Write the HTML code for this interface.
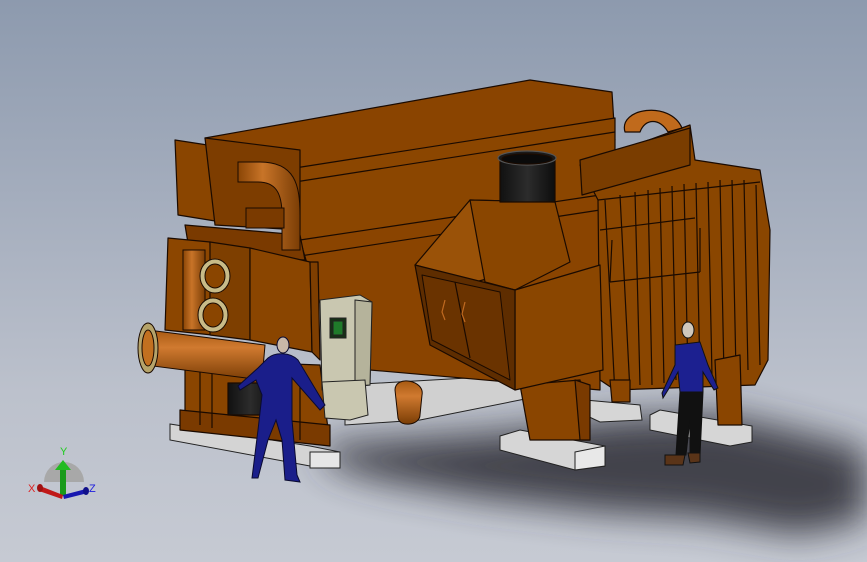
<!DOCTYPE html>
<html><head><meta charset="utf-8"><style>
html,body{margin:0;padding:0;width:867px;height:562px;overflow:hidden}
body{background:linear-gradient(180deg,#8d9aae 0%,#a4adbd 35%,#bcc1cc 70%,#c6cad3 100%)}
svg{position:absolute;left:0;top:0}
text{font-family:"Liberation Sans",sans-serif}
</style></head><body>
<svg width="867" height="562" viewBox="0 0 867 562" xmlns="http://www.w3.org/2000/svg">
<defs>
<filter id="bl" x="-20%" y="-50%" width="140%" height="200%"><feGaussianBlur stdDeviation="18"/></filter>
<linearGradient id="pipe" x1="0" y1="0" x2="0" y2="1"><stop offset="0" stop-color="#a85a12"/><stop offset=".35" stop-color="#d07a30"/><stop offset="1" stop-color="#7a3d05"/></linearGradient>
<linearGradient id="pipeV" x1="0" y1="0" x2="1" y2="0"><stop offset="0" stop-color="#8a4505"/><stop offset=".4" stop-color="#c87428"/><stop offset="1" stop-color="#7a3d05"/></linearGradient>
<linearGradient id="blk" x1="0" y1="0" x2="1" y2="0"><stop offset="0" stop-color="#111"/><stop offset=".5" stop-color="#2c2c2c"/><stop offset="1" stop-color="#0d0d0d"/></linearGradient>
</defs>
<!-- shadow -->
<polygon filter="url(#bl)" fill="#34363c" opacity=".9" points="320,445 500,432 620,418 720,414 790,430 867,450 867,520 800,535 700,518 600,512 480,498 380,480 330,465"/>
<!-- gray bases -->
<g stroke="#222" stroke-width="1">
<polygon fill="#d0d0d0" points="345,385 520,375 530,398 420,420 345,425"/>
<polygon fill="#d4d4d4" points="170,424 310,446 340,452 340,468 310,466 170,440"/>
<polygon fill="#e6e6e6" points="310,452 340,452 340,468 310,468"/>
<polygon fill="#d6d6d6" points="500,436 520,430 605,446 605,466 575,470 500,450"/>
<polygon fill="#e8e8e8" points="575,452 605,446 605,466 575,470"/>
<polygon fill="#d6d6d6" points="650,415 660,410 752,426 752,442 730,446 650,430"/>
<polygon fill="#d6d6d6" points="585,400 640,405 642,420 600,422 585,415"/>
</g>
<!-- main orange -->
<g stroke="#1a0a00" stroke-width="1.2" stroke-linejoin="round">
<polygon fill="#8a4400" points="205,138 530,80 612,92 615,140 300,200 295,168"/>
<polygon fill="#8b4600" points="295,168 615,118 615,210 300,262"/>
<line x1="295" y1="182" x2="615" y2="132"/>
<polygon fill="#8a4400" points="300,240 600,195 600,390 370,370 318,300"/>
<line x1="300" y1="256" x2="600" y2="210"/>
<polygon fill="#8a4500" points="175,140 240,150 240,225 178,215"/>
<polygon fill="#7d3d00" points="205,138 300,150 300,230 215,225"/>
<polygon fill="#7a3a00" points="185,225 300,235 305,260 190,255"/>
<polygon fill="#8c4600" points="168,238 210,242 212,335 165,330"/>
<polygon fill="#7e3f00" points="210,242 250,248 250,340 210,335"/>
<polygon fill="#8a4500" points="250,248 310,262 312,352 250,340"/>
<polygon fill="#7e3e00" points="310,262 318,262 320,360 312,352"/>
<polygon fill="#8a4500" points="185,360 320,365 330,445 185,430"/>
<polygon fill="#7a3a00" points="180,410 330,425 330,446 180,430"/>
<line x1="200" y1="368" x2="200" y2="425"/><line x1="212" y1="370" x2="212" y2="428"/><line x1="300" y1="372" x2="300" y2="440"/>
<rect x="228" y="383" width="45" height="32" fill="url(#blk)"/>
<polygon fill="#8a4600" points="580,165 690,125 695,160 760,170 770,230 768,360 755,385 615,390 600,380 598,200"/>
<polygon fill="#7a3d00" points="580,160 690,128 690,165 582,195"/>
<g fill="none" stroke="#1a0a00">
<path d="M605,200 L615,395 M620,195 L630,392 M635,192 L640,385 M648,190 L652,385 M660,188 L664,383 M672,186 L676,380 M684,184 L688,378 M696,183 L700,378 M708,182 L712,376 M720,180 L724,375 M732,180 L736,372 M744,180 L748,370 M756,185 L760,365"/>
<path d="M598,200 L760,182 M600,230 L695,218 M610,282 L700,272 M610,282 L612,240 M700,272 L700,228"/>
</g>
<path d="M625,132 C618,108 670,100 682,128 L668,132 C660,118 645,118 640,132 Z" fill="#c06a1c"/>
<polygon fill="#8a4500" points="520,385 580,380 590,440 530,440"/>
<polygon fill="#7a3a00" points="575,380 590,385 590,440 580,440"/>
<polygon fill="#8a4500" points="715,360 740,355 742,425 718,425"/>
<polygon fill="#8a4500" points="610,380 630,380 630,402 612,402"/>
<polygon fill="#9a5208" points="415,265 470,200 555,202 560,260 475,282"/>
<polygon fill="#8a4600" points="470,200 555,202 570,262 515,290 485,282"/>
<polygon fill="#8a4600" points="515,290 600,265 603,370 515,390"/>
<polygon fill="#5e2d00" points="415,265 515,290 515,390 430,345"/>
<polygon fill="#6a3300" points="422,275 500,292 510,380 432,340" stroke-width="1"/>
<line x1="455" y1="282" x2="470" y2="358"/>
<path d="M445,300 l-3,12 l3,8 M465,302 l-3,12 l3,8" stroke="#c06a20" fill="none"/>
<rect x="500" y="158" width="55" height="44" fill="url(#blk)"/>
<ellipse cx="527" cy="158" rx="29" ry="7" fill="#1a1a1a" stroke="#555"/>
<ellipse cx="527" cy="159" rx="25" ry="5" fill="#0a0a0a"/>
</g>
<g stroke="#1a0a00" stroke-width="1">
<path d="M238,162 L260,162 C295,162 300,185 300,215 L300,250 L282,250 L282,215 C282,192 275,182 258,182 L238,182 Z" fill="url(#pipeV)"/>
<rect x="183" y="250" width="22" height="80" fill="url(#pipeV)"/>
<path d="M148,330 L265,345 L262,380 L145,365 Z" fill="url(#pipe)"/>
<ellipse cx="148" cy="348" rx="10" ry="25" fill="#b5a36a"/>
<ellipse cx="148" cy="348" rx="6" ry="18" fill="#c27020"/>
<ellipse cx="215" cy="276" rx="15" ry="17" fill="#c8bb88"/>
<ellipse cx="215" cy="276" rx="10" ry="12" fill="#8a4500"/>
<ellipse cx="213" cy="315" rx="15" ry="17" fill="#c8bb88"/>
<ellipse cx="213" cy="315" rx="10" ry="12" fill="#8a4500"/>
<rect x="246" y="208" width="38" height="20" fill="#7a3a00"/>
<path d="M395,390 C395,375 425,380 422,395 L420,415 C420,425 400,428 398,418 Z" fill="url(#pipe)"/>
</g>
<g stroke="#222" stroke-width="1">
<polygon fill="#c9c7b0" points="320,300 360,295 372,302 370,385 322,390"/>
<polygon fill="#b5b39b" points="355,300 372,302 370,385 355,386"/>
<polygon fill="#c9c7b0" points="322,382 365,380 368,415 350,420 325,418"/>
<rect x="330" y="318" width="16" height="20" fill="#163016"/>
<rect x="333" y="321" width="10" height="14" fill="#1f7a2a"/>
</g>
<g stroke="#0a0a30" stroke-width="1">
<ellipse cx="283" cy="345" rx="6" ry="8" fill="#c9b8a8"/>
<path d="M268,358 C275,352 290,352 298,360 L325,405 L320,410 L292,378 L292,420 L297,475 L300,482 L285,480 L282,440 L276,420 L268,440 L258,478 L252,478 L258,430 L262,395 L256,380 L240,390 L238,386 L258,368 Z" fill="#1a1e8a"/>
</g>
<g stroke="#111" stroke-width="1">
<ellipse cx="688" cy="330" rx="6" ry="8" fill="#d0c8bc"/>
<path d="M675,345 L700,342 L708,365 L718,388 L714,390 L703,372 L703,392 L680,392 L678,372 L668,390 L663,398 L662,393 L675,365 Z" fill="#1c2090"/>
<path d="M680,392 L703,392 L700,455 L690,455 L690,420 L686,455 L676,455 Z" fill="#111"/>
<path d="M665,455 L685,455 L683,465 L665,465 Z M688,453 L700,453 L700,462 L690,463 Z" fill="#5a3418"/>
</g>
<g>
<path d="M44,482 A20,20 0 0 1 84,482 Z" fill="#a8a8a8"/>
<rect x="60" y="468" width="6" height="28" fill="#1a9a1a"/>
<polygon points="55,470 71,470 63,460" fill="#22bb22"/>
<polygon points="40,486 63,495 62,499 39,491" fill="#c01818"/>
<ellipse cx="40" cy="488" rx="3" ry="4" fill="#a01010"/>
<polygon points="63,495 86,489 88,493 64,499" fill="#1818b0"/>
<ellipse cx="86" cy="491" rx="3" ry="4" fill="#10108a"/>
<text x="60" y="455" font-size="11" fill="#20cc20">Y</text>
<text x="28" y="492" font-size="11" fill="#dd2020">X</text>
<text x="89" y="492" font-size="11" fill="#2020dd">Z</text>
</g>
</svg>
</body></html>
